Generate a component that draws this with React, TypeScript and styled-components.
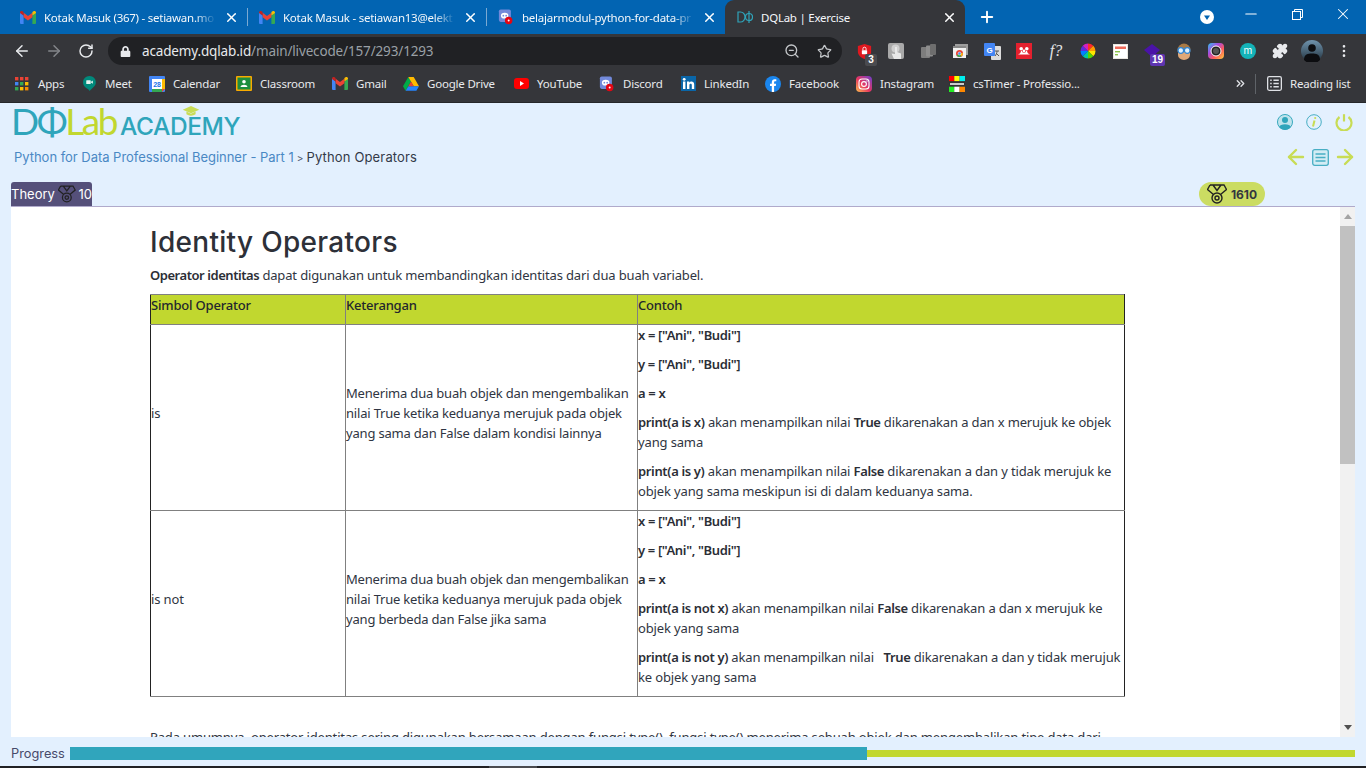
import React from "react";
import styled, { createGlobalStyle } from "styled-components";
import { ArrowLeft, ArrowRight, RotateCw, ZoomOut, Star, Plus, X, Minus, MoreVertical, ChevronsRight, Puzzle } from "lucide-react";
import { FaLock } from "react-icons/fa";

const Global = createGlobalStyle`
  html, body { margin: 0; padding: 0; height: 768px; overflow: hidden; background: #e3f0fe; }
  * { box-sizing: border-box; }
`;

const Screen = styled.div`
  width: 1366px; height: 768px; display: flex; flex-direction: column; overflow: hidden;
  font-family: "Noto Sans", "Open Sans", sans-serif;
`;
/* Browser chrome */
const TabStrip = styled.div`
  height: 34px; background: #0264b2; display: flex; align-items: stretch; padding-left: 8px; flex: none; color: #fff;
`;
const Tab = styled.div<{ $active?: boolean }>`
  width: ${p => (p.$active ? 240 : 239)}px; height: 34px; display: flex; align-items: center; gap: 8px;
  padding: 0 8px 0 12px; position: relative; font-size: 11.5px; letter-spacing: -0.25px;
  background: ${p => (p.$active ? "#35363a" : "transparent")};
  border-radius: ${p => (p.$active ? "9px 9px 0 0" : "0")};
`;
const TabSepBox = styled.span`
  position: absolute; right: -1px; top: 8px; width: 1px; height: 18px; background: #7aa9d2;
`;
const TabTitle = styled.span<{ $fade?: boolean }>`
  flex: 1; white-space: nowrap; overflow: hidden; color: #f4f7fa;
  ${p => (p.$fade ? "-webkit-mask-image: linear-gradient(90deg,#000 88%,transparent); mask-image: linear-gradient(90deg,#000 88%,transparent);" : "")}
`;
const NewTab = styled.div`
  width: 44px; display: flex; align-items: center; justify-content: center;
`;
const WindowControls = styled.div`
  margin-left: auto; display: flex; align-items: flex-start; height: 34px;
`;
const WinBtn = styled.div<{ $w: number; $h: number }>`
  width: ${p => p.$w}px; height: ${p => p.$h}px; display: flex; align-items: center; justify-content: center;
`;
const Toolbar = styled.div`
  height: 34px; background: #35363a; display: flex; align-items: center; padding-left: 6px; flex: none; color: #fff;
`;
const NavBtn = styled.div<{ $dim?: boolean }>`
  width: 32px; height: 28px; display: flex; align-items: center; justify-content: center; color: ${p => (p.$dim ? "#84868a" : "#e8eaed")};
`;
const Omnibox = styled.div`
  margin-left: 6px; width: 734px; height: 28px; border-radius: 14px; background: #202124; display: flex; align-items: center; padding: 0 10px 0 12px; gap: 11px;
`;
const Url = styled.div`
  flex: 1; font-size: 13.5px; color: #9aa0a6; white-space: nowrap; letter-spacing: -0.15px;
  b { font-weight: 400; color: #e8eaed; }
`;
const OmniIcons = styled.div`
  display: flex; align-items: center; gap: 17px; color: #c4c7ca;
`;
const Extensions = styled.div`
  display: flex; align-items: center; padding-left: 6px;
`;
const Ext = styled.div`
  width: 32px; height: 28px; display: flex; align-items: center; justify-content: center; position: relative; flex: none;
`;
const ExtBadge = styled.span<{ $bg: string }>`
  position: absolute; right: 3px; bottom: -1px; background: ${p => p.$bg}; color: #fff; font: 700 10px/12px "Liberation Sans", sans-serif;
  min-width: 12px; height: 12px; padding: 0 2px; border-radius: 2px; text-align: center;
`;
const BookmarkBar = styled.div`
  height: 35px; background: #35363a; border-bottom: 1px solid #26272a; display: flex; align-items: center; padding: 0 0 3px 14px; flex: none;
`;
const Bookmark = styled.div<{ $w: number }>`
  width: ${p => p.$w}px; flex: none; display: flex; align-items: center; gap: 8px; font-size: 11.5px; letter-spacing: -0.2px; color: #e8eaed; white-space: nowrap;
`;
const IconBox = styled.span`
  width: 16px; height: 16px; flex: none; display: flex; align-items: center; justify-content: center;
`;
const BarRight = styled.div`
  margin-left: auto; display: flex; align-items: center; color: #dfe1e5; padding-right: 14px;
`;
const BarDivider = styled.span`
  width: 1px; height: 20px; background: #5f6368; margin: 0 10px 0 8px;
`;
/* Page */
const Page = styled.div`
  flex: 1; background: #e3f0fe; display: flex; flex-direction: column; min-height: 0; padding: 0 11px;
`;
const TopRow = styled.div`
  height: 40px; display: flex; align-items: center; justify-content: space-between; padding: 0 0 2px 3px;
`;
const Logo = styled.div`
  display: flex; align-items: baseline; position: relative; height: 34px; line-height: 34px; white-space: nowrap; margin: -3px 0 0 -3px;
`;
const LogoMark = styled.span<{ $lime?: boolean }>`
  font: 400 37px/34px "Lato", sans-serif; color: ${p => (p.$lime ? "#c1d72f" : "#2fa5bb")}; letter-spacing: -2.4px;
`;
const LogoWord = styled.span`
  font: 500 24.5px/34px "Inter", sans-serif; color: #2fa5bb; margin-left: 4px; letter-spacing: -0.45px;
`;
const LogoCap = styled.svg`
  position: absolute; left: 171px; top: 2px;
`;
const IconRow = styled.div<{ $gap: number; $end: number }>`
  display: flex; align-items: center; gap: ${p => p.$gap}px; color: #c8dc55; margin-right: ${p => p.$end}px;
`;
const CrumbRow = styled.div`
  height: 28px; display: flex; align-items: center; justify-content: space-between; padding-left: 3px;
`;
const Crumbs = styled.div`
  font: 400 13px "Inter", sans-serif; color: #333a48; white-space: nowrap; letter-spacing: 0.15px;
`;
const CrumbLink = styled.span`
  color: #4a88c4; letter-spacing: -0.03px;
`;
const CrumbSep = styled.span`
  font-size: 10px; margin: 0 3px 0 3px; color: #4a5568;
`;
const TabRow = styled.div`
  margin-top: 11px; height: 24px; display: flex; justify-content: space-between; align-items: stretch;
`;
const TheoryTab = styled.div`
  width: 81px; background: #55507a; border-radius: 3px 3px 0 0; color: #fff; display: flex; align-items: center; gap: 3px; font: 400 13px "Inter", sans-serif; white-space: nowrap;
`;
const ScorePill = styled.div`
  width: 66px; margin-right: 90px; background: #cbdc62; border-radius: 12px; display: flex; align-items: center; justify-content: center; gap: 4px; font: 700 12px "Inter", sans-serif; color: #33363f;
`;
const Panel = styled.div`
  height: 531px; background: #fff; border-top: 1px solid #b0aacb; display: flex; overflow: hidden; flex: none;
`;
const Content = styled.div`
  flex: 1; padding: 18px 0 0 139px; overflow: hidden; color: #2f3542;
`;
const Heading = styled.h1`
  margin: 0 0 6px; font: 500 28px/34px "Inter", sans-serif; color: #2d3038; letter-spacing: 0.3px;
`;
const Para = styled.p`
  margin: 0 0 9px; font-size: 13px; line-height: 20px; white-space: nowrap;
  letter-spacing: -0.15px;
  b { font-weight: 600; color: #2b2e36; letter-spacing: -0.45px; }
`;
const DataTable = styled.table`
  width: 975px; border-collapse: collapse; border: 1px solid #222; table-layout: fixed; margin-bottom: 30px;
`;
const HeadCell = styled.th`
  background: #c1d72f; border: 1px solid #808080; padding: 0; font-weight: 500; text-align: left; vertical-align: top; color: #23262d;
  &:first-child { border-left-color: #222; } &:last-child { border-right-color: #222; }
`;
const BodyCell = styled.td`
  border: 1px solid #808080; padding: 0; vertical-align: middle;
  &:first-child { border-left-color: #222; } &:last-child { border-right-color: #222; }
`;
const Cell = styled.p<{ $tight?: boolean }>`
  margin: 0 0 9px; font-size: 13px; line-height: 20px; letter-spacing: ${p => (p.$tight ? -0.19 : -0.14)}px;
  b { font-weight: 600; color: #2b2e36; letter-spacing: -0.35px; }
`;
const Scrollbar = styled.div`
  width: 15px; background: #f1f1f1; display: flex; flex-direction: column; flex: none; align-items: center;
`;
const ScrollArrow = styled.div<{ $down?: boolean }>`
  height: 19px; width: 15px; flex: none; display: flex; align-items: center; justify-content: center;
  &::before { content: ""; border-left: 4px solid transparent; border-right: 4px solid transparent;
    ${p => (p.$down ? "border-top: 5px solid #505050;" : "border-bottom: 5px solid #a3a3a3;")} }
`;
const ScrollThumb = styled.div`
  width: 15px; height: 238px; background: #c1c1c1; flex: none;
`;
const ScrollFill = styled.div`
  flex: 1;
`;
const ProgressRow = styled.div`
  height: 29px; display: flex; align-items: center; padding-top: 4px; flex: none;
`;
const ProgressLabel = styled.div`
  width: 59px; flex: none; font: 400 12.8px "Inter", sans-serif; color: #47496a;
`;
const ProgressTrack = styled.div`
  flex: 1; height: 7px; background: #c1d72f; position: relative;
`;
const ProgressFill = styled.div`
  position: absolute; left: 0; top: -3px; height: 13px; background: #30a5bc;
`;
const BottomStrip = styled.div`
  height: 2px; background: #202124; flex: none; display: flex;
`;
const BottomThumb = styled.div`
  width: 48px; margin-left: 489px; background: #4a4c50;
`;

const Gmail = () => (
  <svg width="16" height="13" viewBox="0 0 16 13">
    <path fill="#4285f4" d="M0 1.5V12a1 1 0 0 0 1 1h2.6V4.6z" />
    <path fill="#34a853" d="M16 1.5V12a1 1 0 0 1-1 1h-2.6V4.6z" />
    <path fill="#ea4335" d="M3.6 6.2V1.8L8 5l4.4-3.2v4.4L8 9.4z" />
    <path fill="#c5221f" d="M0 1.6C0 .3 1.5-.4 2.5.3l1.1.8v3.5L0 2z" />
    <path fill="#fbbc04" d="M16 1.6c0-1.3-1.5-2-2.5-1.3l-1.1.8v3.500L16 2z" />
  </svg>
);
const DiscordDot = () => (
  <svg width="16" height="16" viewBox="0 0 18 18">
    <rect x="1" y="0.5" width="13.5" height="14" rx="2" fill="#7289da" />
    <ellipse cx="7.5" cy="7.5" rx="4.2" ry="3.2" fill="#fff" />
    <circle cx="6" cy="7.5" r="1" fill="#7289da" /><circle cx="9.2" cy="7.5" r="1" fill="#7289da" />
    <circle cx="12" cy="13" r="4.2" fill="#e30613" /><circle cx="12" cy="13" r="1.1" fill="#fff" />
  </svg>
);
const Apps = () => (
  <svg width="14" height="14" viewBox="0 0 14 14">
    {[["#ea4335","#ea4335","#ea4335"],["#4285f4","#34a853","#fbbc04"],["#34a853","#fbbc04","#fb8c00"]].map((r,i)=>r.map((c,j)=>(
      <rect key={`${i}${j}`} x={j*5} y={i*5} width="3.4" height="3.4" fill={c} />
    )))}
  </svg>
);
const Meet = () => (
  <svg width="13" height="15" viewBox="0 0 14 16">
    <path fill="#00897b" d="M7 0a6.6 6.6 0 0 1 6.8 6.8C13.8 11 9 13.5 7 16c0-2.2-7-3.5-7-9.2A6.8 6.8 0 0 1 7 0z" />
    <rect x="3.5" y="4.5" width="4.8" height="4" rx=".6" fill="#e6f4f1" /><path fill="#e6f4f1" d="M8.6 6.2l2-1.4v3.5l-2-1.4z" />
  </svg>
);
const Calendar = () => (
  <svg width="16" height="16" viewBox="0 0 16 16">
    <rect width="16" height="16" rx="1" fill="#4285f4" />
    <rect x="3" y="3" width="10" height="10" fill="#fff" />
    <rect x="13" y="3" width="3" height="10" fill="#fbbc04" /><rect x="3" y="13" width="10" height="3" fill="#34a853" />
    <path d="M13 13h3l-3 3z" fill="#ea4335" />
    <text x="8" y="11" fontSize="7" fontWeight="700" textAnchor="middle" fill="#1a73e8" fontFamily="Liberation Sans">28</text>
  </svg>
);
const Classroom = () => (
  <svg width="16" height="15" viewBox="0 0 16 15">
    <rect width="16" height="15" rx="1" fill="#f9ab00" />
    <rect x="1.5" y="1.5" width="13" height="12" fill="#1e8e3e" />
    <circle cx="8" cy="5.8" r="1.8" fill="#fff" /><path fill="#fff" d="M4.6 11c0-3 6.8-3 6.8 0z" />
  </svg>
);
const Drive = () => (
  <svg width="16" height="14" viewBox="0 0 16 14">
    <path fill="#00ac47" d="M5.3 0L0 9.3l2.6 4.4 5.4-9.3z" />
    <path fill="#ffba00" d="M5.3 0h5.4L16 9.3h-5.3z" />
    <path fill="#2684fc" d="M2.6 13.7h10.8L16 9.3H5.3z" />
    <path fill="#ea4335" d="M8 4.4L5.300 9.300h5.400z" />
  </svg>
);
const YouTube = () => (
  <svg width="15" height="11" viewBox="0 0 15 11"><rect width="15" height="11" rx="3" fill="#f00" /><path fill="#fff" d="M6 3l4 2.5L6 8z" /></svg>
);
const LinkedIn = () => (
  <svg width="15" height="15" viewBox="0 0 15 15"><rect width="15" height="15" fill="#0a66a8" />
    <rect x="2" y="5.5" width="2.4" height="7.5" fill="#fff" /><circle cx="3.2" cy="3.3" r="1.4" fill="#fff" />
    <path fill="#fff" d="M6 5.5h2.3v1c1-1.6 4.9-1.9 4.9 1.9V13h-2.4V9c0-1.9-2.4-1.7-2.4 0v4H6z" /></svg>
);
const Facebook = () => (
  <svg width="16" height="16" viewBox="0 0 16 16"><circle cx="8" cy="8" r="8" fill="#1a86ee" />
    <path fill="#fff" d="M6.8 16V10H5V7.8h1.8V6.2C6.8 4.2 8 3.2 9.7 3.2c.8 0 1.6.1 1.6.1v1.9h-1c-.9 0-1.2.6-1.2 1.2v1.4h2l-.3 2.2H9.1v6z" /></svg>
);
const Instagram = () => (
  <svg width="16" height="16" viewBox="0 0 16 16">
    <defs><linearGradient id="ig" x1="0" y1="1" x2="1" y2="0"><stop offset="0" stopColor="#fdc04e" /><stop offset=".45" stopColor="#e8365f" /><stop offset="1" stopColor="#6a3fd0" /></linearGradient></defs>
    <rect width="16" height="16" rx="4" fill="url(#ig)" />
    <rect x="3" y="3" width="10" height="10" rx="3" fill="none" stroke="#fff" strokeWidth="1.1" />
    <circle cx="8" cy="8" r="2.4" fill="none" stroke="#fff" strokeWidth="1.1" /><circle cx="11" cy="5" r=".7" fill="#fff" />
  </svg>
);
const CsTimer = () => (
  <svg width="16" height="16" viewBox="0 0 16 16">
    <rect width="5.3" height="5.3" fill="#f00" /><rect x="5.3" width="5.3" height="5.3" fill="#ff0" /><rect x="10.6" width="5.4" height="5.3" fill="#0ee" />
    <rect y="5.3" width="16" height="5.4" fill="#333" /><rect x="1" y="7" width="14" height="2" fill="#ccc" />
    <rect y="10.7" width="5.3" height="5.3" fill="#2e2" /><rect x="5.3" y="10.7" width="5.3" height="5.3" fill="#fff" /><rect x="10.6" y="10.7" width="5.4" height="5.3" fill="#f80" />
  </svg>
);
const ReadingList = () => (
  <svg width="15" height="15" viewBox="0 0 14 14" fill="none" stroke="#dfe1e5"><rect x=".6" y=".6" width="12.8" height="12.8" rx="1.4" strokeWidth="1.2" />
    <path d="M3 4h1.4M3 7h1.4M3 10h1.4M6 4h5M6 7h5M6 10h5" strokeWidth="1.3" /></svg>
);
const Shield = () => (
  <svg width="15" height="15" viewBox="0 0 15 17"><path fill="#e0181f" d="M7.5 0L15 2.4v6.4c0 3.6-3 6.6-7.5 8.2C3 15.400 0 12.400 0 8.800V2.400z" />
    <rect x="4.500" y="7" width="6" height="4.500" rx=".6" fill="#fff" /><path d="M5.700 7V5.400a1.800 1.800 0 0 1 3.600 0V7" stroke="#fff" fill="none" /></svg>
);
const Touch = () => (
  <svg width="16" height="16" viewBox="0 0 16 16"><rect width="16" height="16" rx="2" fill="#a9a9a9" />
    <circle cx="7.500" cy="5.500" r="4" fill="#cfcfcf" /><path fill="#e8e8e8" d="M7 4h2v5l4 1.500V16H6L3.500 10.500 7 11z" /></svg>
);
const Stack = () => (
  <svg width="15" height="15" viewBox="0 0 15 15"><rect x="0" y="3" width="9" height="11" rx="1" fill="#7d7d7d" /><rect x="5" y="1.500" width="7" height="11" rx="1" fill="#8e8e8e" /><rect x="9" y="0" width="6" height="11" rx="1" fill="#6e6e6e" /></svg>
);
const ChromeApps = () => (
  <svg width="15" height="14" viewBox="0 0 15 14"><rect x="2" y="0" width="13" height="11" fill="#9e9e9e" /><rect x="0" y="2" width="13" height="12" fill="#f1f1f1" /><rect x="0" y="2" width="13" height="2" fill="#888" />
    <circle cx="6.500" cy="9.500" r="3.500" fill="#ea4335" /><path d="M6.500 9.500L3.500 11.300A3.500 3.500 0 0 0 8.500 12.300z" fill="#34a853" /><path d="M6.500 9.500l3.400-.5a3.500 3.500 0 0 1-1.400 3.300z" fill="#fbbc04" /><circle cx="6.500" cy="9.500" r="1.400" fill="#4285f4" stroke="#fff" strokeWidth=".5" /></svg>
);
const Translate = () => (
  <svg width="17" height="17" viewBox="0 0 17 17"><rect x="7" y="3" width="10" height="14" rx="1" fill="#dcdcdc" /><rect x="0" y="0" width="11" height="13" rx="1" fill="#4285f4" />
    <text x="5.500" y="10" fontSize="8" fontWeight="700" textAnchor="middle" fill="#fff" fontFamily="Liberation Sans">G</text>
    <path d="M11 8h4M13 8c0 2-1 4-2 5M12 10l3 3" stroke="#555" fill="none" /></svg>
);
const Mendeley = () => (
  <svg width="16" height="16" viewBox="0 0 16 16"><rect width="16" height="16" fill="#e4202e" />
    <circle cx="5.200" cy="5.800" r="1.800" fill="#fff" /><circle cx="10.800" cy="5.800" r="1.800" fill="#fff" /><circle cx="8" cy="8" r="1.400" fill="#fff" />
    <path d="M2.500 11c1.500 0 2-1 2.500-3h1c.3 1.500 1 1.800 2 1.800S9.700 9.500 10 8h1c.5 2 1 3 2.500 3v.5h-11z" fill="#fff" /></svg>
);
const Fonts = styled.span`
  font: italic 400 16px "Liberation Serif", serif; color: #e6e6e6;
`;
const ColorWheel = () => (
  <svg width="16" height="16" viewBox="0 0 16 16">
    {["#ff2a2a","#ff9a00","#ffe600","#55d400","#00c8a0","#0080ff","#5a2de0","#d020c0"].map((c,i)=>{
      const a=(i*45-90)*Math.PI/180,b=((i+1)*45-90)*Math.PI/180;
      return <path key={c} fill={c} d={`M8 8L${8+7.5*Math.cos(a)} ${8+7.5*Math.sin(a)}A7.5 7.5 0 0 1 ${8+7.5*Math.cos(b)} ${8+7.5*Math.sin(b)}z`} />;
    })}
  </svg>
);
const NoteExt = () => (
  <svg width="15" height="15" viewBox="0 0 15 15"><rect width="15" height="15" fill="#e9e6df" /><rect x="1" y="1" width="13" height="13" fill="#fff" /><rect x="2" y="2.500" width="11" height="2.500" fill="#ef6a5a" /><rect x="2" y="7" width="5" height="1.400" fill="#8bc34a" /><rect x="2" y="10" width="3" height="1.400" fill="#8bc34a" /></svg>
);
const PurpleDiamond = () => (
  <svg width="16" height="14" viewBox="0 0 16 14"><path fill="#4a13a8" d="M8 0l8 6-8 7-8-7z" /></svg>
);
const Glasses = () => (
  <svg width="16" height="17" viewBox="0 0 16 17"><circle cx="8" cy="7" r="6.500" fill="#a97a45" /><path d="M2 9h12v3a6 5 0 0 1-12 0z" fill="#e0a878" />
    <circle cx="4.800" cy="7.500" r="2.800" fill="#dff1ff" stroke="#2f86d6" strokeWidth="1.200" /><circle cx="11.200" cy="7.500" r="2.800" fill="#dff1ff" stroke="#2f86d6" strokeWidth="1.200" /></svg>
);
const Lens = () => (
  <svg width="16" height="16" viewBox="0 0 16 16">
    <defs><linearGradient id="lens" x1="0" y1="0" x2="1" y2="1"><stop offset="0" stopColor="#2ec5f0" /><stop offset=".35" stopColor="#a74be0" /><stop offset=".65" stopColor="#ff5a5a" /><stop offset="1" stopColor="#ffd23f" /></linearGradient></defs>
    <rect width="16" height="16" rx="4" fill="url(#lens)" /><circle cx="8" cy="8" r="5" fill="#222" stroke="#fff" strokeWidth="1" /><circle cx="8" cy="8" r="3" fill="#555" /></svg>
);
const MExt = () => (
  <svg width="16" height="16" viewBox="0 0 16 16"><circle cx="8" cy="8" r="8" fill="#14b3b8" />
    <text x="8" y="11" fontSize="10" textAnchor="middle" fill="#fff" fontFamily="Inter">m</text></svg>
);
const Avatar = () => (
  <svg width="22" height="22" viewBox="0 0 22 22">
    <defs><linearGradient id="av" x1="0" y1="0" x2="0" y2="1"><stop offset="0" stopColor="#6f93ad" /><stop offset="1" stopColor="#22333f" /></linearGradient></defs>
    <circle cx="11" cy="11" r="11" fill="url(#av)" /><circle cx="11" cy="8" r="3.800" fill="#0c0d10" /><path d="M3 20c0-6 4-6.500 8-6.500s8 .5 8 6.500a11 11 0 0 1-16 0z" fill="#0c0d10" /></svg>
);
const Medal = ({ size = 20, color = "#222" }: { size?: number; color?: string }) => (
  <svg width={size} height={size} viewBox="0 0 20 20" fill="none" stroke={color} strokeWidth="1.400">
    <path d="M3 1h14l2.500 4.500-6 5M3 1L.5 5.500l6 5M6 1l4 5.500L14 1" />
    <circle cx="10" cy="14" r="5" /><circle cx="10" cy="14" r="2" />
  </svg>
);
const UserIcon = () => (
  <svg width="16" height="16" viewBox="0 0 17 17"><circle cx="8.500" cy="8.500" r="8" fill="#bfe3ec" stroke="#2fa5bb" /><circle cx="8.500" cy="6.300" r="3.200" fill="#2fa5bb" /><path d="M2.300 14c.8-4 11.600-4 12.400 0a8 8 0 0 1-12.400 0z" fill="#2fa5bb" /></svg>
);
const InfoIcon = () => (
  <svg width="16" height="16" viewBox="0 0 16 16"><circle cx="8" cy="8" r="7.300" fill="#e3f0fe" stroke="#48aec4" /><path d="M8.500 6.500L7 12.500" stroke="#c8dc55" strokeWidth="2" /><circle cx="9.200" cy="4" r="1.100" fill="#c8dc55" /></svg>
);
const PowerIcon = () => (
  <svg width="18" height="18" viewBox="0 0 18 18" fill="none" stroke="#c8dc55" strokeWidth="2.200"><path d="M9 1.200v7.300" /><path d="M4.500 4a7.500 7.500 0 1 0 9 0" /></svg>
);
const DocIcon = () => (
  <svg width="17" height="17" viewBox="0 0 17 17" fill="none"><rect x=".7" y=".7" width="15.600" height="15.600" rx="2" fill="#d3ecf4" stroke="#48aec4" strokeWidth="1.300" /><path d="M3.500 5h10M3.500 8.500h10M3.500 12h10" stroke="#48aec4" strokeWidth="1.300" /></svg>
);

const bookmarks: [string, React.ReactNode, number][] = [
  ["Apps", <Apps />, 67], ["Meet", <Meet />, 68], ["Calendar", <Calendar />, 87], ["Classroom", <Classroom />, 96],
  ["Gmail", <Gmail />, 71], ["Google Drive", <Drive />, 110], ["YouTube", <YouTube />, 86], ["Discord", <DiscordDot />, 81],
  ["LinkedIn", <LinkedIn />, 85], ["Facebook", <Facebook />, 91], ["Instagram", <Instagram />, 93], ["csTimer - Professio...", <CsTimer />, 130],
];

const Row1 = () => (
  <>
    <Cell><b>x = ["Ani", "Budi"]</b></Cell>
    <Cell><b>y = ["Ani", "Budi"]</b></Cell>
    <Cell><b>a = x</b></Cell>
  </>
);

export default function App() {
  return (
    <Screen>
      <Global />
      <TabStrip>
        <Tab><Gmail /><TabTitle $fade>Kotak Masuk (367) - setiawan.mo</TabTitle><X size={15} strokeWidth={2.4} /><TabSepBox /></Tab>
        <Tab><Gmail /><TabTitle $fade>Kotak Masuk - setiawan13@elekt</TabTitle><X size={15} strokeWidth={2.4} /><TabSepBox /></Tab>
        <Tab><DiscordDot /><TabTitle $fade>belajarmodul-python-for-data-pr</TabTitle><X size={15} strokeWidth={2.4} /></Tab>
        <Tab $active>
          <svg width="16" height="12" viewBox="0 0 16 12" fill="none" stroke="#2fa5bb" strokeWidth="1.200">
            <path d="M1 1h2.500a4.500 5 0 0 1 0 10H1z" /><circle cx="12" cy="6" r="3.500" /><path d="M12 0v12" />
          </svg>
          <TabTitle>DQLab | Exercise</TabTitle><X size={15} strokeWidth={2.4} />
        </Tab>
        <NewTab><Plus size={18} strokeWidth={2.5} /></NewTab>
        <WindowControls>
          <WinBtn $w={42} $h={34}>
            <svg width="14" height="14" viewBox="0 0 14 14"><circle cx="7" cy="7" r="7" fill="#fff" /><path d="M4 5.500h6L7 10z" fill="#0264b2" /></svg>
          </WinBtn>
          <WinBtn $w={46} $h={28}><Minus size={18} strokeWidth={1.4} /></WinBtn>
          <WinBtn $w={46} $h={28}>
            <svg width="11" height="11" viewBox="0 0 11 11" fill="none" stroke="#fff"><rect x=".5" y="2.500" width="8" height="8" /><path d="M2.500 2.500v-2h8v8h-2" /></svg>
          </WinBtn>
          <WinBtn $w={46} $h={28}><X size={18} strokeWidth={1.4} /></WinBtn>
        </WindowControls>
      </TabStrip>
      <Toolbar>
        <NavBtn><ArrowLeft size={18} strokeWidth={2} /></NavBtn>
        <NavBtn $dim><ArrowRight size={18} strokeWidth={2} /></NavBtn>
        <NavBtn><RotateCw size={16} strokeWidth={2.2} /></NavBtn>
        <Omnibox>
          <FaLock size={11} color="#e8eaed" />
          <Url><b>academy.dqlab.id</b>/main/livecode/157/293/1293</Url>
          <OmniIcons><ZoomOut size={16} /><Star size={15} /></OmniIcons>
        </Omnibox>
        <Extensions>
          <Ext><Shield /><ExtBadge $bg="#4a4b4f">3</ExtBadge></Ext>
          <Ext><Touch /></Ext>
          <Ext><Stack /></Ext>
          <Ext><ChromeApps /></Ext>
          <Ext><Translate /></Ext>
          <Ext><Mendeley /></Ext>
          <Ext><Fonts>f?</Fonts></Ext>
          <Ext><ColorWheel /></Ext>
          <Ext><NoteExt /></Ext>
          <Ext><PurpleDiamond /><ExtBadge $bg="#5e35b1">19</ExtBadge></Ext>
          <Ext><Glasses /></Ext>
          <Ext><Lens /></Ext>
          <Ext><MExt /></Ext>
          <Ext><Puzzle size={16} color="#e8eaed" fill="#e8eaed" /></Ext>
          <Ext><Avatar /></Ext>
          <Ext><MoreVertical size={16} color="#e8eaed" /></Ext>
        </Extensions>
      </Toolbar>
      <BookmarkBar>
        {bookmarks.map(([label, icon, w]) => (
          <Bookmark key={label} $w={w}><IconBox>{icon}</IconBox><span>{label}</span></Bookmark>
        ))}
        <BarRight>
          <ChevronsRight size={13} strokeWidth={2.5} />
          <BarDivider />
          <Bookmark $w={86}><IconBox><ReadingList /></IconBox><span>Reading list</span></Bookmark>
        </BarRight>
      </BookmarkBar>
      <Page>
        <TopRow>
          <Logo>
            <LogoMark>DΦ</LogoMark><LogoMark $lime>Lab</LogoMark><LogoWord>ACADEMY</LogoWord>
            <LogoCap width="18" height="11" viewBox="0 0 18 12"><path d="M9 0l9 4-9 4-9-4z" fill="#c9dc55" /><path d="M4 6v3c3 2 7 2 10 0V6L9 8.500z" fill="#c9dc55" /></LogoCap>
          </Logo>
          <IconRow $gap={13} $end={2}><UserIcon /><InfoIcon /><PowerIcon /></IconRow>
        </TopRow>
        <CrumbRow>
          <Crumbs><CrumbLink>Python for Data Professional Beginner - Part 1</CrumbLink><CrumbSep>{">"}</CrumbSep>Python Operators</Crumbs>
          <IconRow $gap={4} $end={-2}><ArrowLeft size={24} strokeWidth={2.4} /><DocIcon /><ArrowRight size={24} strokeWidth={2.4} /></IconRow>
        </CrumbRow>
        <TabRow>
          <TheoryTab>Theory<Medal /><span>10</span></TheoryTab>
          <ScorePill><Medal />1610</ScorePill>
        </TabRow>
        <Panel>
          <Content>
            <Heading>Identity Operators</Heading>
            <Para><b>Operator identitas</b> dapat digunakan untuk membandingkan identitas dari dua buah variabel.</Para>
            <DataTable>
              <colgroup><col style={{ width: 195 }} /><col style={{ width: 292 }} /><col /></colgroup>
              <thead>
                <tr>
                  <HeadCell><Cell $tight>Simbol Operator</Cell></HeadCell>
                  <HeadCell><Cell $tight>Keterangan</Cell></HeadCell>
                  <HeadCell><Cell $tight>Contoh</Cell></HeadCell>
                </tr>
              </thead>
              <tbody>
                <tr>
                  <BodyCell><Cell>is</Cell></BodyCell>
                  <BodyCell><Cell $tight>Menerima dua buah objek dan mengembalikan nilai True ketika keduanya merujuk pada objek yang sama dan False dalam kondisi lainnya</Cell></BodyCell>
                  <BodyCell>
                    <Row1 />
                    <Cell><b>print(a is x)</b> akan menampilkan nilai <b>True</b> dikarenakan a dan x merujuk ke objek yang sama</Cell>
                    <Cell><b>print(a is y)</b> akan menampilkan nilai <b>False</b> dikarenakan a dan y tidak merujuk ke objek yang sama meskipun isi di dalam keduanya sama.</Cell>
                  </BodyCell>
                </tr>
                <tr>
                  <BodyCell><Cell>is not</Cell></BodyCell>
                  <BodyCell><Cell $tight>Menerima dua buah objek dan mengembalikan nilai True ketika keduanya merujuk pada objek yang berbeda dan False jika sama</Cell></BodyCell>
                  <BodyCell>
                    <Row1 />
                    <Cell><b>print(a is not x)</b> akan menampilkan nilai <b>False</b> dikarenakan a dan x merujuk ke objek yang sama</Cell>
                    <Cell><b>print(a is not y)</b> akan menampilkan nilai &nbsp; <b>True</b> dikarenakan a dan y tidak merujuk ke objek yang sama</Cell>
                  </BodyCell>
                </tr>
              </tbody>
            </DataTable>
            <Para>Pada umumnya, operator identitas sering digunakan bersamaan dengan fungsi type(). fungsi type() menerima sebuah objek dan mengembalikan tipe data dari</Para>
          </Content>
          <Scrollbar>
            <ScrollArrow />
            <ScrollThumb />
            <ScrollFill />
            <ScrollArrow $down />
          </Scrollbar>
        </Panel>
        <ProgressRow>
          <ProgressLabel>Progress</ProgressLabel>
          <ProgressTrack><ProgressFill style={{ width: `${(797 / 1285) * 100}%` }} /></ProgressTrack>
        </ProgressRow>
      </Page>
      <BottomStrip><BottomThumb /></BottomStrip>
    </Screen>
  );
}
